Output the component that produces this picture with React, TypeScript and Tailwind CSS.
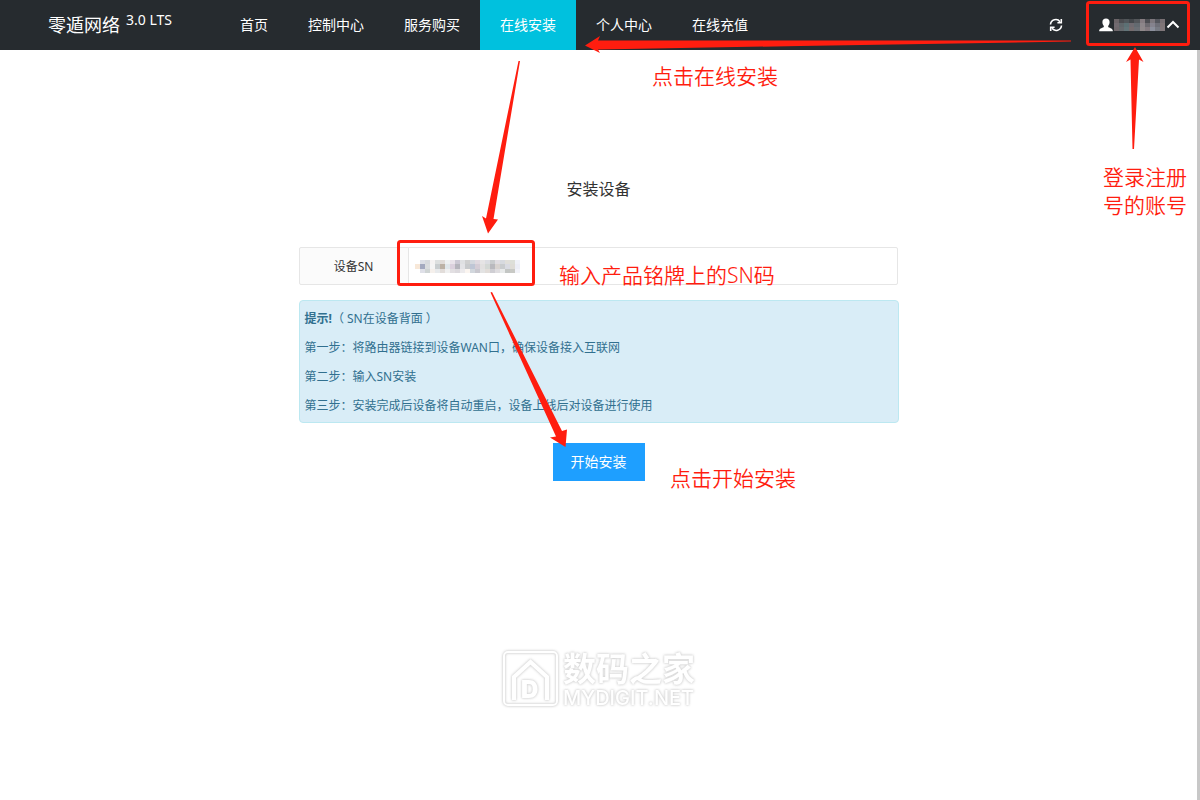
import React from 'react';

const RED = '#ff1d0f';

const navItems = [
  { label: '首页' },
  { label: '控制中心' },
  { label: '服务购买' },
  { label: '在线安装', active: true },
  { label: '个人中心' },
  { label: '在线充值' },
];

const steps = [
  '第一步：将路由器链接到设备WAN口，确保设备接入互联网',
  '第二步：输入SN安装',
  '第三步：安装完成后设备将自动重启，设备上线后对设备进行使用',
];

// rows of tile colours for the masked values
const accountTiles = [
  ['#6b6468', '#4b4c50', '#505559', '#43474b', '#53565a', '#847b80', '#4c4d52', '#7b767c', '#54565d', '#776f73'],
  ['#716a70', '#5f666a', '#5c7074', '#6f6a70', '#636a70', '#8d868a', '#6d6a70', '#85838e', '#6e6f78', '#7f7577'],
  ['#6f686c', '#65696d', '#627478', '#756c6e', '#6b6f75', '#8f888a', '#837a80', '#8b8f9c', '#777a83', '#80777a'],
];

const snTiles = [
  ['#ffffff', '#dcdfe6', '#d6d9dd', '#f5f3f3', '#dde0e0', '#e0dcd8', '#eef1f1', '#e9e3ea', '#cbc7d3', '#dfe0e2', '#cfcfcf', '#d4d8de', '#e0d9e0', '#e6e4e5', '#dcdde2', '#c9ccce', '#e0dde2', '#d7dadf', '#e0dfda', '#dddfd8', '#f0f2f8'],
  ['#f8e8d8', '#a3a9bf', '#d9dcde', '#f5f5f5', '#c9ced0', '#bcb2a5', '#e0e7ea', '#dbd0dd', '#b5b4bc', '#e3e3e6', '#c8cacc', '#bfc6d5', '#d5cdd6', '#e2e0e0', '#d4d8d5', '#b9b9be', '#d8d3d0', '#c9ccce', '#d9dbe2', '#dedcd6', '#eceef6'],
  ['#ffffff', '#dfe0e8', '#cfd4d4', '#f5f0ec', '#e8eaec', '#e2ddda', '#f0f0f0', '#e2dfe2', '#dcd9dd', '#eceaec', '#fbf5f0', '#d2d7dd', '#c9c8cf', '#e3e3e3', '#e2ddd9', '#cfced3', '#dfdde0', '#e8eaea', '#c3c6c4', '#c8c9c5', '#f2f3f9'],
];

const Mosaic = ({ rows, className }: { rows: string[][]; className: string }) => (
  <svg className={className} aria-hidden="true" shapeRendering="crispEdges" preserveAspectRatio="none"
    viewBox={`0 0 ${rows[0].length} ${rows.length}`}>
    {rows.map((row, y) => row.map((fill, x) => (
      <rect key={`${x}-${y}`} x={x} y={y} width={1} height={1} fill={fill} />
    )))}
  </svg>
);

const Header = () => (
  <header className="flex h-[50px] items-stretch bg-[#262b2f] text-white">
    <div className="flex w-[220px] shrink-0 items-center justify-center gap-[6px] text-lg">
      <span>零遁网络</span>
      <sup className="text-sm top-[-5px]">3.0 LTS</sup>
    </div>
    <nav className="flex text-sm">
      {navItems.map((item) => (
        <a key={item.label} href="#" className={`flex items-center px-5 ${item.active ? 'bg-[#00c1de]' : ''}`}>
          {item.label}
        </a>
      ))}
    </nav>
    <div className="ml-auto flex items-center pr-5">
      <button type="button" aria-label="刷新" className="mr-9">
        <svg width="14" height="14" viewBox="0 0 14 14" fill="none" stroke="#fff" strokeWidth="1.6">
          <path d="M1.5 6.5A5.3 5.3 0 0 1 11 3.7M12.5 7.5A5.3 5.3 0 0 1 3 10.3" />
          <path d="M12.3 1v3.8H8.4M1.7 13V9.2h3.9" />
        </svg>
      </button>
      <button type="button" aria-label="账号" className="flex items-center gap-px">
        <svg width="14" height="14" viewBox="0 0 14 14" fill="#fff">
          <path d="M7 .6c2.3 0 3.600 1.300 3.600 3.500 0 1.600-.6 3-1.400 3.800v1c.4.8 4.600 1.200 4.600 3.600v.8H.2v-.8C.2 10.100 4.400 9.700 4.800 8.900v-1C4 7.100 3.400 5.700 3.400 4.100 3.400 1.900 4.700.6 7 .6z" />
        </svg>
        <Mosaic rows={accountTiles} className="h-3 w-[51px]" />
        <svg width="14" height="14" viewBox="0 0 14 14" fill="none" stroke="#fff" strokeWidth="2">
          <path d="M1.500 9.500 7 4l5.500 5.500" />
        </svg>
      </button>
    </div>
  </header>
);

const InstallForm = () => (
  <form className="mx-auto mt-[125px] flex w-full max-w-[600px] flex-col items-center" onSubmit={(e) => e.preventDefault()}>
    <h1 className="text-base leading-7 text-[#333]">安装设备</h1>
    <div className="mt-11 flex h-[38px] w-full pr-px text-xs">
      <label htmlFor="sn" className="flex w-[110px] shrink-0 items-center justify-center rounded-l-[2px] border border-[#e6e6e6] bg-[#fbfbfb] pt-0.5 text-[#333]">
        设备SN
      </label>
      <div className="relative -ml-px flex-1">
        <input id="sn" type="text" className="h-full w-full rounded-r-[2px] border border-[#e6e6e6] bg-white px-2 outline-none" />
        <Mosaic rows={snTiles} className="absolute left-[7px] top-[13px] h-[13px] w-[105px]" />
      </div>
    </div>
    <div className="mt-[15px] flex w-full flex-col gap-[9px] rounded border border-[#bce8f1] bg-[#d9edf7] px-[5px] pb-1.5 pt-2 text-xs leading-5 text-[#31708f]">
      <p><strong>提示!</strong>（ SN在设备背面 ）</p>
      {steps.map((step) => <p key={step}>{step}</p>)}
    </div>
    <button type="submit" className="mt-5 h-[38px] w-[92px] bg-[#1e9fff] text-sm text-white">开始安装</button>
  </form>
);

const Watermark = () => (
  <svg className="absolute left-[496px] top-[644px] h-[70px] w-[206px]" viewBox="0 0 206 70" aria-hidden="true">
    <g style={{ filter: 'drop-shadow(0 0 1px #d4d4d4) drop-shadow(0 0 1px #ddd)' }}>
      <rect x="8" y="8" width="53" height="53" rx="4" fill="none" stroke="#fff" strokeWidth="2" />
      <path d="M18 56V33L34.500 18 51 33v23" fill="none" stroke="#fff" strokeWidth="4" />
      <text x="25" y="54" fontSize="24" fontWeight="900" fill="#fff" fontFamily="Inter, sans-serif">D</text>
      <text x="67" y="37" fontSize="33" fontWeight="700" fill="#fff" fontFamily="'Noto Sans CJK SC', sans-serif">数码之家</text>
      <text x="67" y="61" fontSize="20" fontWeight="500" fill="#fff" fontFamily="Inter, sans-serif">MYDIGIT.NET</text>
    </g>
  </svg>
);

const Annotations = () => (
  <div className="pointer-events-none absolute inset-0 overflow-hidden text-[21px] font-[350] leading-7 text-[#ff1d0f]">
    <Watermark />
    <svg className="absolute inset-0 size-full" fill={RED} aria-hidden="true">
      <path d="M585 45.500 600 36l-2 4.500L1071 40.500v1L800 46l-202 3.500 2 3.500z" />
      <path d="M518.500 61h1.500L493.500 219l4.500 .5L488 233.500 482 216l4 2.500z" />
      <path d="M490.500 292.500 492 292 562 431l5-1.500-1.500 17.500L550 437.500l6-1z" />
      <path d="M1135 47 1143.500 62l-4.500-2.500L1134 149h-1.500L1130.500 59.500 1126 62z" />
      <rect x="398.500" y="241.500" width="135" height="43" rx="2" fill="none" stroke={RED} strokeWidth="3" />
      <rect x="1087.500" y="2.500" width="101" height="42" rx="2" fill="none" stroke={RED} strokeWidth="3" />
    </svg>
    <p className="absolute left-[652px] top-[62px]">点击在线安装</p>
    <p className="absolute left-[1103px] top-[163px] w-[86px]">登录注册号的账号</p>
    <p className="absolute left-[559px] top-[261px]">输入产品铭牌上的SN码</p>
    <p className="absolute left-[670px] top-[464px]">点击开始安装</p>
  </div>
);

export default function App() {
  return (
    <div className="relative flex min-h-screen flex-col bg-white font-['Noto_Sans','Noto_Sans_CJK_SC',sans-serif]">
      <Header />
      <div className="flex flex-1">
        <main className="flex-1">
          <InstallForm />
        </main>
        <div className="w-[3px] bg-[#c8c8c8]" />
      </div>
      <Annotations />
    </div>
  );
}
